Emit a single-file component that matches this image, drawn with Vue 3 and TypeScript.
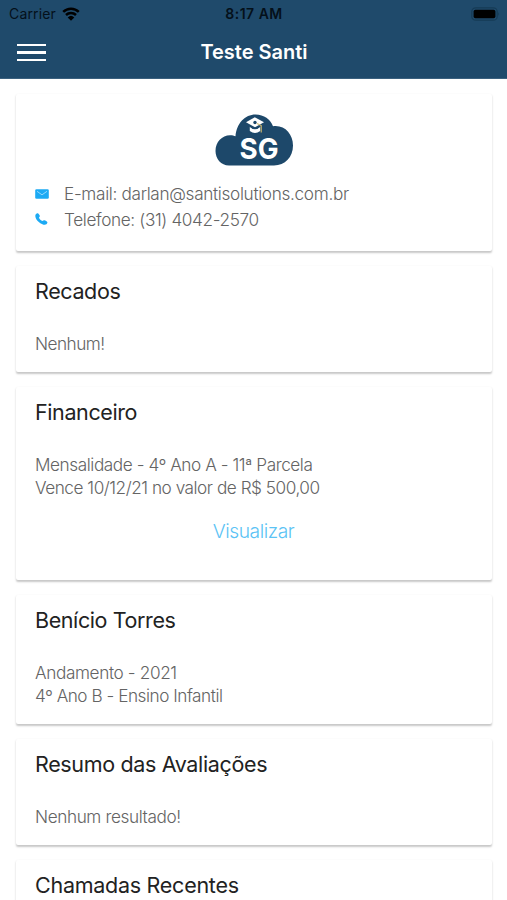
<script setup lang="ts">
interface Line {
  text: string
  spacing: number
}

interface Section {
  title: string
  spacing: number
  lines: Line[]
  action?: string
}

const sections: Section[] = [
  { title: 'Recados', spacing: -0.38, lines: [{ text: 'Nenhum!', spacing: -0.5 }] },
  {
    title: 'Financeiro',
    spacing: -0.4,
    lines: [
      { text: 'Mensalidade - 4º Ano A - 11ª Parcela', spacing: -0.43 },
      { text: 'Vence 10/12/21 no valor de R$ 500,00', spacing: -0.47 },
    ],
    action: 'Visualizar',
  },
  {
    title: 'Benício Torres',
    spacing: -0.4,
    lines: [
      { text: 'Andamento - 2021', spacing: -0.37 },
      { text: '4º Ano B - Ensino Infantil', spacing: -0.47 },
    ],
  },
  { title: 'Resumo das Avaliações', spacing: -0.35, lines: [{ text: 'Nenhum resultado!', spacing: -0.4 }] },
  { title: 'Chamadas Recentes', spacing: -0.27, lines: [] },
]
</script>

<template>
  <div class="screen">
    <header class="header">
      <div class="status">
        <div class="carrier">
          <span>Carrier</span>
          <svg class="wifi" width="18" height="14" viewBox="0 0 18 14">
            <path d="M1.2 4.9a11.2 11.2 0 0 1 15.6 0M4 8a7.2 7.2 0 0 1 10 0" fill="none" stroke="#000" stroke-width="2.5" />
            <path d="M9 13.7 5.7 10.4a4.8 4.8 0 0 1 6.6 0z" />
          </svg>
        </div>
        <span class="clock">8:17 AM</span>
        <svg class="battery" width="30" height="14" viewBox="0 0 30 14">
          <rect x=".8" y=".8" width="25.4" height="12.4" rx="3.8" fill="none" stroke="#163b56" stroke-width="1.2" />
          <rect x="2.6" y="2.8" width="21.8" height="8.4" rx="1.8" />
          <path d="M27.3 5q1.7 2 0 4z" fill="#163b56" />
        </svg>
      </div>
      <div class="nav">
        <button class="menu" aria-label="Menu"><i></i><i></i><i></i></button>
        <h1>Teste Santi</h1>
      </div>
    </header>

    <main class="cards">
      <section class="card profile">
        <svg class="logo" width="80" height="54" viewBox="0 0 80 54">
          <path d="M15 52.5C7 52.5 1.500 45.800 1.500 38C1.500 29 8 22.200 16 22.200C18.500 22.200 20 22.700 21.500 23.300C22.500 10.500 31 1.500 41.500 1.500C50 1.500 56.500 6.500 59 13.200C70.500 11.500 79 21 79 32.500C79 44 71 52.500 60 52.500Z" fill="#1d486a" />
          <path d="M32 9.300 40.800 4.300 50 9.300 41 14.200z" fill="#fff" />
          <path d="M35.800 13.500q5 5 10.400 0v4.500q-5.200 4-10.400 0z" fill="#fff" />
          <path d="M35.600 13q5.400 5 10.800 0" fill="none" stroke="#1d486a" stroke-width="1.200" />
          <circle cx="41" cy="9.500" r="1.700" fill="#1d486a" />
          <path d="m43 10.500 4.200 2v7" fill="none" stroke="#d5bd70" stroke-width="1.100" />
          <text x="25.500" y="46" textLength="39" lengthAdjust="spacingAndGlyphs">SG</text>
        </svg>
        <div class="contact email">
          <svg width="14" height="10" viewBox="0 0 14 10">
            <rect x=".2" y=".2" width="13.600" height="9.600" rx="1.300" fill="#1caaf4" />
            <path d="m2 2.300 5 3.500 5-3.500" fill="none" stroke="#b9e7ff" stroke-width=".75" />
          </svg>
          <span>E-mail: darlan@santisolutions.com.br</span>
        </div>
        <div class="contact phone">
          <svg width="14" height="12" viewBox="0 0 14 12">
            <path d="M.6 1.500C1.500.5 2.300 0 2.900.3c.8.500 1.700 1.800 2 2.700.1.700-.7 1.100-.9 1.700.4 1.300 2 2.700 3.500 3.200.7 0 1.200-.9 2-.7 1 .3 2.300 1.100 2.800 1.900.4.700-.5 2-1.500 2.500C7.600 12.600.1 7.500.3 2.700z" fill="#1caaf4" />
          </svg>
          <span>Telefone: (31) 4042-2570</span>
        </div>
      </section>

      <section v-for="section in sections" :key="section.title" class="card">
        <h2><span :style="{ letterSpacing: section.spacing + 'px' }">{{ section.title }}</span></h2>
        <p v-for="line in section.lines" :key="line.text">
          <span :style="{ letterSpacing: line.spacing + 'px' }">{{ line.text }}</span>
        </p>
        <a v-if="section.action" class="action">{{ section.action }}</a>
      </section>
    </main>
  </div>
</template>

<style>
body {
  margin: 0;
  overflow: hidden;
}
</style>

<style scoped>
.screen {
  height: 900px;
  overflow: hidden;
  background: #fff;
  font-family: Inter, "Liberation Sans", sans-serif;
}
.header {
  box-sizing: border-box;
  height: 79px;
  background: #1f4a6b;
  border-bottom: 1px solid #3b617f;
}
.status {
  display: grid;
  grid-template-columns: 1fr auto 1fr;
  align-items: center;
  height: 27px;
  padding: 0 6px 0 9px;
  font-size: 14px;
  color: #04101a;
}
.carrier {
  display: flex;
  align-items: center;
  gap: 6px;
  letter-spacing: 0.15px;
}
.clock {
  margin-right: 2px;
  font-weight: 600;
  letter-spacing: 0.5px;
}
.battery {
  justify-self: end;
}
.nav {
  display: grid;
  grid-template-columns: 60px 1fr 60px;
  align-items: center;
  height: 51px;
}
.menu {
  display: flex;
  flex-direction: column;
  gap: 5px;
  width: 29px;
  margin-left: 17px;
  padding: 0;
  border: 0;
  background: none;
}
.menu i {
  height: 2.300px;
  background: #fff;
}
h1 {
  margin: 0 0 2px 1px;
  font-size: 20px;
  font-weight: 600;
  text-align: center;
  color: #fff;
}
.cards {
  display: flex;
  flex-direction: column;
  gap: 15px;
  padding: 15px 15px 0 16px;
}
.card {
  box-sizing: border-box;
  flex: none;
  padding: 10px 20px 17px 19px;
  background: #fff;
  border-radius: 2px;
  box-shadow: 0 1.500px 2px rgba(0, 0, 0, 0.22);
}
.card:last-child {
  min-height: 106px;
}
h2 {
  margin: 0 0 26px;
  font-size: 21.500px;
  line-height: 30px;
  font-weight: 400;
  color: #222;
}
p {
  margin: 0;
  font-size: 17.200px;
  line-height: 23px;
  font-weight: 300;
  color: #646464;
  white-space: nowrap;
}
.action {
  display: block;
  padding: 18px 0 18px;
  font-size: 19.200px;
  line-height: 28px;
  font-weight: 300;
  letter-spacing: -0.45px;
  text-align: center;
  color: #5bc3f5;
}
.profile {
  display: flex;
  flex-direction: column;
  height: 157px;
  padding: 19px 19px 0;
}
.logo {
  align-self: center;
}
.logo text {
  font-family: Inter, sans-serif;
  font-size: 29px;
  font-weight: 700;
  fill: #fff;
}
.contact {
  display: flex;
  align-items: center;
  height: 26px;
  font-size: 17.200px;
  font-weight: 300;
  color: #646464;
}
.email {
  margin-top: 14px;
}
.contact svg {
  margin-right: 15px;
}
.contact span {
  margin-bottom: 1px;
  letter-spacing: -0.33px;
}
.phone svg,
.phone span {
  margin-bottom: 2px;
}
.phone span {
  letter-spacing: -0.37px;
}
</style>
